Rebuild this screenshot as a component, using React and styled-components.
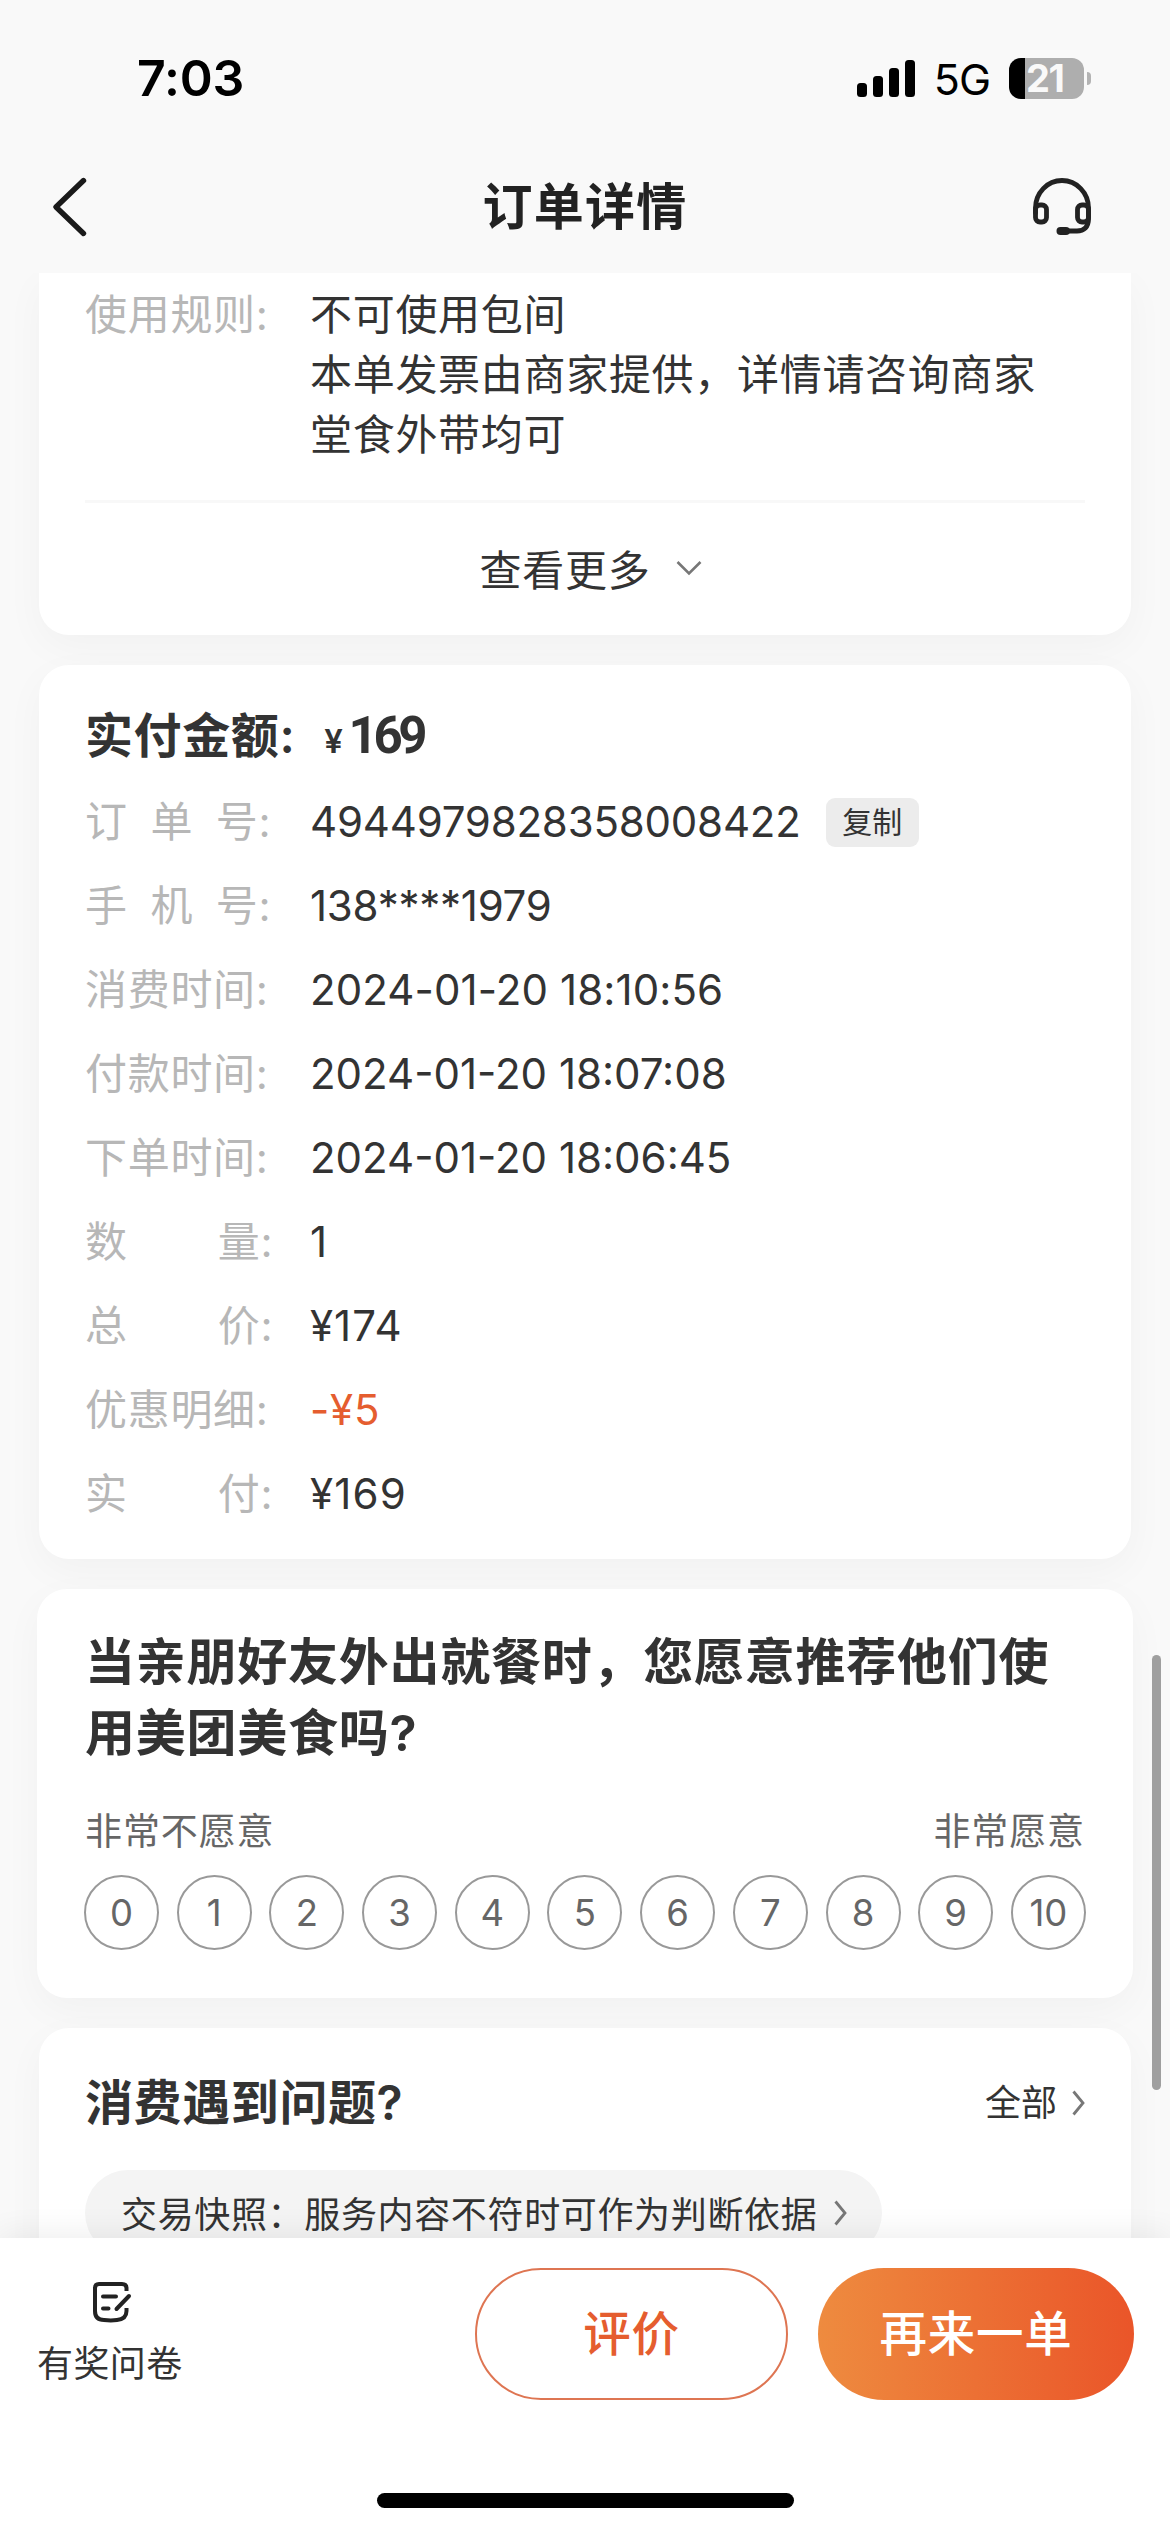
import React from "react";
import styled, { createGlobalStyle } from "styled-components";

const Global = createGlobalStyle`
  * { box-sizing: border-box; }
  body {
    margin: 0;
    background: #f9f9f9;
    font-family: Inter, "Noto Sans CJK SC", sans-serif;
    color: #333;
  }
  button { font: inherit; color: inherit; padding: 0; margin: 0; }
`;

const Screen = styled.div`
  width: 1170px;
  height: 2532px;
  display: flex;
  flex-direction: column;
  overflow: hidden;
  background: #f9f9f9;
`;

const StatusBar = styled.header`
  height: 141px;
  flex: none;
  display: flex;
  align-items: center;
  justify-content: space-between;
  padding: 15px 79px 0 137px;
  color: #000;
`;

const Clock = styled.span`
  font-size: 50px;
  font-weight: 600;
  line-height: 60px;
  letter-spacing: -0.2px;
`;

const StatusIcons = styled.div`
  display: flex;
  align-items: center;
`;

const Network = styled.span`
  font-size: 43px;
  line-height: 50px;
  letter-spacing: -1px;
  margin: 2px 19px 0 19px;
`;

const Battery = styled.div`
  width: 75px;
  height: 41px;
  border-radius: 12px;
  background: linear-gradient(90deg, #000 16px, #aeaeae 16px);
  color: #f9f9f9;
  font-size: 38px;
  font-weight: 700;
  line-height: 41px;
  letter-spacing: -1.5px;
  padding-left: 17px;
`;

const BatteryTip = styled.span`
  width: 4px;
  height: 13px;
  margin-left: 3px;
  border-radius: 0 5px 5px 0;
  background: #b3b3b3;
`;

const NavBar = styled.nav`
  height: 132px;
  flex: none;
  display: grid;
  grid-template-columns: 60px 1fr 60px;
  align-items: center;
  padding: 0 78px 0 50px;
`;

const NavTitle = styled.h1`
  margin: 0;
  padding-left: 28px;
  text-align: center;
  font-size: 50px;
  font-weight: 600;
  letter-spacing: 1.2px;
  line-height: 132px;
  color: #222;
`;

const Scroller = styled.main`
  position: relative;
  flex: 1;
  min-height: 0;
  overflow: hidden;
  display: flex;
  flex-direction: column;
  gap: 30px;
  padding: 0 37px;
`;

const ScrollThumb = styled.div`
  position: absolute;
  right: 9px;
  top: 1382px;
  width: 9px;
  height: 435px;
  border-radius: 5px;
  background: #9f9f9f;
`;

const Card = styled.section`
  flex: none;
  margin: 0 ${(p) => (p.$wide ? 0 : 2)}px;
  padding: 0 ${(p) => (p.$wide ? 48 : 46)}px;
  height: ${(p) => p.$height}px;
  border-radius: ${(p) => (p.$flatTop ? "0 0 30px 30px" : "30px")};
  background: #fff;
  box-shadow: 0 12px 40px rgba(0, 0, 0, 0.035);
`;

const Row = styled.div`
  display: flex;
  align-items: flex-start;
  height: ${(p) => p.$height || "auto"};
  padding-top: ${(p) => p.$top || 0}px;
  line-height: ${(p) => p.$line}px;
  font-size: 42px;
`;

const Label = styled.span`
  width: 225px;
  flex: none;
  color: #b7b7b7;
  letter-spacing: 0.7px;
  white-space: nowrap;
`;

const Spread = styled.span`
  letter-spacing: ${(p) => p.$extra + 0.7}px;
`;

const Value = styled.span`
  color: ${(p) => (p.$accent ? "#e55d2f" : "#333")};
  letter-spacing: ${(p) => p.$track || 0}px;
  white-space: pre-line;
`;

const CopyButton = styled.button`
  align-self: center;
  width: 93px;
  height: 49px;
  margin-left: 25px;
  border: 0;
  border-radius: 9px;
  background: #ececec;
  font-size: 30px;
  line-height: 48px;
`;

const MoreRow = styled.div`
  display: flex;
  align-items: center;
  justify-content: center;
  gap: 26px;
  height: 131px;
  margin-top: 35px;
  padding-left: 12px;
  border-top: 3px solid #f8f8f8;
  font-size: 42px;
  letter-spacing: 0.7px;

  svg { margin-top: 2px; }
`;

const AmountTitle = styled.h2`
  margin: 0;
  height: 115px;
  padding-top: 29px;
  display: flex;
  align-items: baseline;
  font-size: 48px;
  line-height: 84px;
  font-weight: 600;
  letter-spacing: 0.6px;
`;

const Yen = styled.span`
  font-size: 33px;
  font-weight: 600;
  margin-left: 29px;
`;

const Amount = styled.span`
  font-family: Roboto, sans-serif;
  font-size: 51px;
  font-weight: 700;
  letter-spacing: -4.4px;
  margin-left: 5px;
`;

const Question = styled.h2`
  margin: 0;
  padding-top: 38px;
  width: 980px;
  font-size: 50px;
  font-weight: 600;
  line-height: 70.5px;
  letter-spacing: 0.75px;
`;

const ScaleEnds = styled.div`
  display: flex;
  justify-content: space-between;
  margin-top: 37px;
  font-size: 37px;
  line-height: 54px;
  letter-spacing: 0.9px;
  color: #666;
`;

const Scale = styled.div`
  display: flex;
  justify-content: space-between;
  margin: 16px -1px 0;
`;

const Score = styled.button`
  width: 75px;
  height: 75px;
  border: 2px solid #999;
  border-radius: 50%;
  background: transparent;
  color: #666;
  font-size: 36.5px;
  line-height: 70px;
`;

const HelpHeader = styled.div`
  display: flex;
  justify-content: space-between;
  align-items: center;
  padding-top: 40px;
  line-height: 70px;
`;

const HelpTitle = styled.h2`
  margin: 0;
  font-size: 48px;
  font-weight: 600;
  letter-spacing: 0.6px;
`;

const AllLink = styled.a`
  display: flex;
  align-items: center;
  gap: 15px;
  font-size: 36px;
`;

const HelpPill = styled.a`
  display: flex;
  align-items: center;
  gap: 17px;
  width: 797px;
  height: 86px;
  margin-top: 32px;
  padding: 0 0 3px 36px;
  border-radius: 43px;
  background: #f4f4f4;
  font-size: 36px;
  letter-spacing: 0.65px;

  svg { margin-top: 2px; }
`;

const BottomBar = styled.footer`
  position: relative;
  height: 294px;
  flex: none;
  display: flex;
  flex-direction: column;
  align-items: center;
  justify-content: space-between;
  padding: 30px 36px 24px 37px;
  background: #fff;
  box-shadow: 0 -4px 30px rgba(0, 0, 0, 0.07);
`;

const Actions = styled.div`
  width: 100%;
  display: flex;
  align-items: flex-start;
`;

const Survey = styled.a`
  display: flex;
  flex-direction: column;
  align-items: center;
  gap: 15px;
  padding-top: 13px;
  margin-right: auto;
  font-size: 36px;
  line-height: 52px;
  letter-spacing: 0.4px;

  svg { margin-left: 4px; }
`;

const ActionButton = styled.button`
  width: ${(p) => (p.$primary ? 316 : 313)}px;
  height: 132px;
  margin-left: 30px;
  padding-bottom: 7px;
  border: ${(p) => (p.$primary ? "0" : "2px solid #de7552")};
  border-radius: 66px;
  background: ${(p) => (p.$primary ? "linear-gradient(90deg, #ee8b3f, #ea5529)" : "#fff")};
  color: ${(p) => (p.$primary ? "#fff" : "#e55d2f")};
  font-size: 47.5px;
  font-weight: 500;
  letter-spacing: 0.8px;
`;

const HomeIndicator = styled.div`
  width: 417px;
  height: 15px;
  border-radius: 8px;
  background: #000;
`;

const SignalIcon = () => (
  <svg width="58" height="37" viewBox="0 0 58 37">
    <rect x="0" y="23" width="10" height="14" rx="3.5" />
    <rect x="16" y="16" width="10" height="21" rx="3.5" />
    <rect x="32" y="8" width="10" height="29" rx="3.5" />
    <rect x="48" y="0" width="10" height="37" rx="3.5" />
  </svg>
);

const BackIcon = () => (
  <svg width="40" height="64" viewBox="0 0 40 64" fill="none" stroke="#1a1a1a" strokeWidth="5.4" strokeLinecap="round" strokeLinejoin="round">
    <path d="M33.5 5.5L6 32L33.5 58.5" />
  </svg>
);

const HeadsetIcon = () => (
  <svg width="60" height="60" viewBox="0 0 60 60" fill="none" stroke="#222" strokeWidth="4.8" strokeLinecap="round" strokeLinejoin="round">
    <path d="M3.500 36V31A26.500 27.500 0 0 1 56.500 31V42C56.500 50 52 54 45 54H34" />
    <rect x="3.5" y="28" width="11" height="17" rx="4.5" />
    <rect x="45.5" y="28" width="11" height="17" rx="4.5" />
    <path d="M28.5 54H34" strokeWidth="8" />
  </svg>
);

const Chevron = ({ down }) =>
  down ? (
    <svg width="26" height="16" viewBox="0 0 26 16" fill="none" stroke="#777" strokeWidth="2.6">
      <path d="M1.5 2L13 13.5L24.5 2" />
    </svg>
  ) : (
    <svg width="13" height="26" viewBox="0 0 13 26" fill="none" stroke="#777" strokeWidth="2.8">
      <path d="M1.5 1.5L11 13L1.5 24.5" />
    </svg>
  );

const SurveyIcon = () => (
  <svg width="40" height="42" viewBox="0 0 40 42" fill="none" stroke="#222" strokeWidth="4" strokeLinecap="round" strokeLinejoin="round">
    <path d="M34.5 10V7Q34.5 3 30 3H7Q3 3 3 7V30Q3 39 12 39Q19 39.8 25 39Q34.5 38 34.5 30V27" strokeLinecap="butt" />
    <path d="M11 15.5H24M11 27.5H16.5M24.5 28L37 15" />
  </svg>
);

const details = [
  { label: "订单号", value: "4944979828358008422", track: -0.2, copy: true },
  { label: "手机号", value: "138****1979", track: -0.25 },
  { label: "消费时间", value: "2024-01-20 18:10:56", track: 0.1 },
  { label: "付款时间", value: "2024-01-20 18:07:08", track: 0 },
  { label: "下单时间", value: "2024-01-20 18:06:45", track: 0 },
  { label: "数量", value: "1" },
  { label: "总价", value: "¥174", track: 1 },
  { label: "优惠明细", value: "-¥5", track: 0.8, accent: true },
  { label: "实付", value: "¥169", track: 1.2 },
];

const extraByLength = { 2: 90, 3: 22.7, 4: 0 };

const DetailLabel = ({ text }) => (
  <Label>
    <Spread $extra={extraByLength[text.length]}>{text.slice(0, -1)}</Spread>
    {text.slice(-1) + ":"}
  </Label>
);

export default function App() {
  return (
    <>
      <Global />
      <Screen>
        <StatusBar>
          <Clock>7:03</Clock>
          <StatusIcons>
            <SignalIcon />
            <Network>5G</Network>
            <Battery>21</Battery>
            <BatteryTip />
          </StatusIcons>
        </StatusBar>
        <NavBar>
          <BackIcon />
          <NavTitle>订单详情</NavTitle>
          <HeadsetIcon />
        </NavBar>

        <Scroller>
          <Card $height={362} $flatTop>
            <Row $line={60} $top={12}>
              <DetailLabel text="使用规则" />
              <Value $track={0.7}>
                {"不可使用包间\n本单发票由商家提供，详情请咨询商家\n堂食外带均可"}
              </Value>
            </Row>
            <MoreRow>
              查看更多
              <Chevron down />
            </MoreRow>
          </Card>

          <Card $height={894}>
            <AmountTitle>
              实付金额:<Yen>¥</Yen>
              <Amount>169</Amount>
            </AmountTitle>
            {details.map((d) => (
              <Row key={d.label} $line={84} $height="84px">
                <DetailLabel text={d.label} />
                <Value $accent={d.accent} $track={d.track}>{d.value}</Value>
                {d.copy && <CopyButton>复制</CopyButton>}
              </Row>
            ))}
          </Card>

          <Card $height={409} $wide>
            <Question>当亲朋好友外出就餐时，您愿意推荐他们使用美团美食吗?</Question>
            <ScaleEnds>
              <span>非常不愿意</span>
              <span>非常愿意</span>
            </ScaleEnds>
            <Scale>
              {Array.from({ length: 11 }, (_, i) => (
                <Score key={i}>{i}</Score>
              ))}
            </Scale>
          </Card>

          <Card $height={420}>
            <HelpHeader>
              <HelpTitle>消费遇到问题?</HelpTitle>
              <AllLink>
                全部
                <Chevron />
              </AllLink>
            </HelpHeader>
            <HelpPill>
              交易快照：服务内容不符时可作为判断依据
              <Chevron />
            </HelpPill>
          </Card>
          <ScrollThumb />
        </Scroller>

        <BottomBar>
          <Actions>
            <Survey>
              <SurveyIcon />
              有奖问卷
            </Survey>
            <ActionButton>评价</ActionButton>
            <ActionButton $primary>再来一单</ActionButton>
          </Actions>
          <HomeIndicator />
        </BottomBar>
      </Screen>
    </>
  );
}
